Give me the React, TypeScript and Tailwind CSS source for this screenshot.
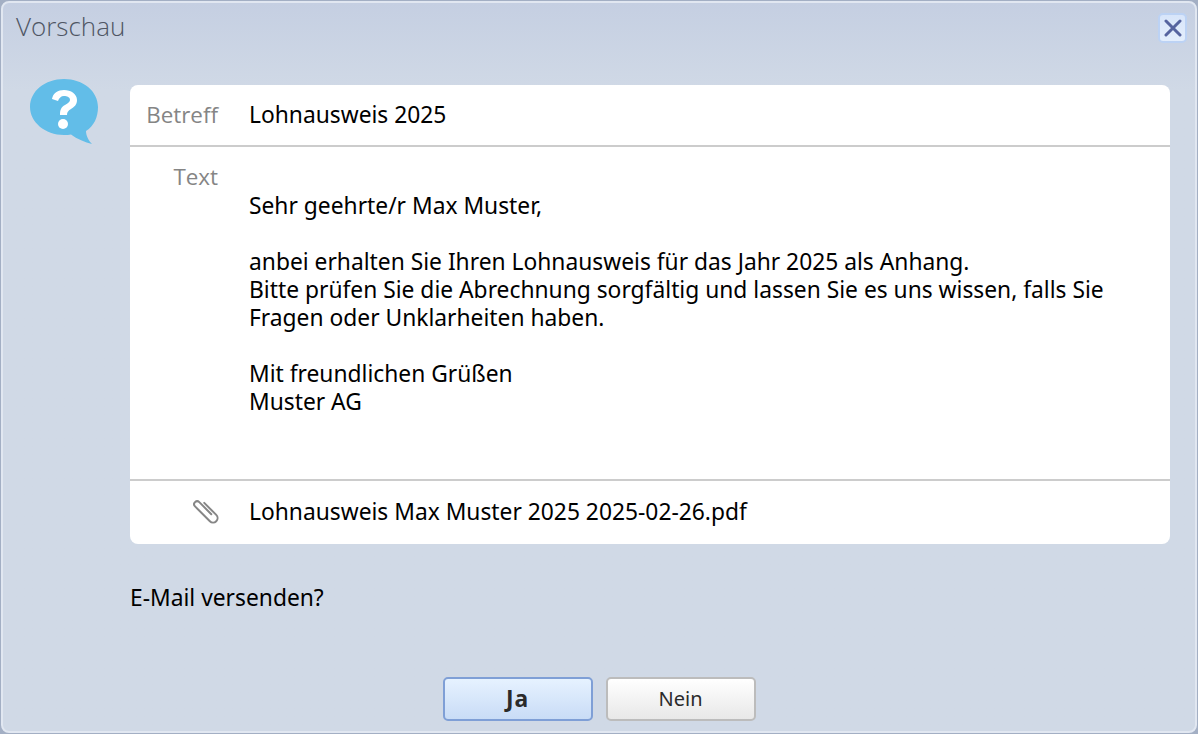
const bodyFont = "font-['Noto_Sans',sans-serif]";

function QuestionBubble() {
  return (
    <svg width="72" height="68" viewBox="0 0 72 68">
      <path d="M36 1C17 1 2 13 2 29c0 15 15 28 34 28 3 0 5-.3 7-.6C49 61 57 64 64 66c-3-3-6-8-6-13 8-5 12-14 12-24C70 13 55 1 36 1z" fill="#62bde8" />
      <path d="M24 21c1-6 6-9 12-9 7 0 13 4 13 10 0 5-3 7-6 9-3 2-4 3-4 6h-7c0-5 1-8 5-10 3-2 5-3 5-5 0-3-3-4-6-4-3 0-5 2-6 5z" fill="#fff" />
      <circle cx="35" cy="46" r="5" fill="#fff" />
    </svg>
  );
}

function Paperclip() {
  return (
    <svg width="26" height="26" viewBox="0 0 26 26" fill="none" stroke="#868686" strokeWidth="2" strokeLinecap="round">
      <g transform="rotate(-45 13 13)">
        <path d="M17.500 6v17a4.500 4.500 0 0 1-9 0V2a3 3 0 0 1 6 0v17" />
      </g>
    </svg>
  );
}

export default function App() {
  return (
    <div className="h-[734px] w-[1198px] bg-[#a3afc4] p-[1px]">
      <div className={`flex h-full flex-col overflow-hidden rounded-[8px] border-2 border-[#e1e7f1] bg-gradient-to-b from-[#c5cfe2] from-0% to-[#d0d9e6] to-[12%] text-[22.8px] text-black ${bodyFont}`}>
        <div className="flex h-[82px] shrink-0 items-start justify-between pl-[13px] pr-[8px] pt-[4px]">
          <span className="font-['Open_Sans',sans-serif] text-[26px] font-light text-[#4f5664]">Vorschau</span>
          <button className="mt-[6px] flex h-[30px] w-[29px] items-center justify-center rounded-[5px] border-2 border-[#bcd2f4] bg-gradient-to-b from-[#d8e5fa] to-[#e4eefc]">
            <svg width="18" height="18" viewBox="0 0 18 18" stroke="#56649f" strokeWidth="3" strokeLinecap="round">
              <path d="M2 2l14 14M16 2 2 16" />
            </svg>
          </button>
        </div>
        <div className="flex min-h-0 flex-1 flex-col">
          <div className="flex flex-1 pr-[25px]">
            <div className="w-[127px] shrink-0 pl-[25px]">
              <div className="-mt-[7px]">
                <QuestionBubble />
              </div>
            </div>
            <div className="flex min-w-0 flex-1 flex-col">
              <div className="flex h-[459px] flex-col rounded-[8px] bg-white">
                <div className="flex h-[62px] items-center border-b-2 border-[#cccccc]">
                  <span className="w-[88px] text-right font-['Open_Sans',sans-serif] text-[22.400px] text-[#858585]">Betreff</span>
                  <span className="ml-[31px]">Lohnausweis 2025</span>
                </div>
                <div className="flex h-[334px] border-b-2 border-[#cccccc]">
                  <span className="w-[88px] pt-[14px] text-right font-['Open_Sans',sans-serif] text-[22.400px] leading-[32px] text-[#858585]">Text</span>
                  <div className="ml-[31px] flex-1 pr-[60px] pt-[45px] leading-[28px]">
                    <p>Sehr geehrte/r Max Muster,</p>
                    <p className="mt-[28px]">anbei erhalten Sie Ihren Lohnausweis für das Jahr 2025 als Anhang.</p>
                    <p>Bitte prüfen Sie die Abrechnung sorgfältig und lassen Sie es uns wissen, falls Sie Fragen oder Unklarheiten haben.</p>
                    <p className="mt-[28px]">Mit freundlichen Grüßen</p>
                    <p>Muster AG</p>
                  </div>
                </div>
                <div className="flex flex-1 items-center">
                  <span className="-mt-[4px] flex w-[89px] justify-end">
                    <Paperclip />
                  </span>
                  <span className="ml-[30px]">Lohnausweis Max Muster 2025 2025-02-26.pdf</span>
                </div>
              </div>
              <p className="mt-[40px] leading-[28px]">E-Mail versenden?</p>
            </div>
          </div>
          <div className="flex h-[54px] shrink-0 justify-center gap-[13px] text-[#2b2b2b]">
            <button className="h-[44px] w-[150px] rounded-[5px] border-2 border-[#7f9fd6] bg-gradient-to-b from-[#e6f2ff] to-[#c9dcf6] font-bold tracking-[1px]">Ja</button>
            <button className="h-[44px] w-[150px] rounded-[5px] border-2 border-[#bcbcbc] bg-gradient-to-b from-white to-[#e8e8e8] text-[20px]">Nein</button>
          </div>
        </div>
      </div>
    </div>
  );
}
